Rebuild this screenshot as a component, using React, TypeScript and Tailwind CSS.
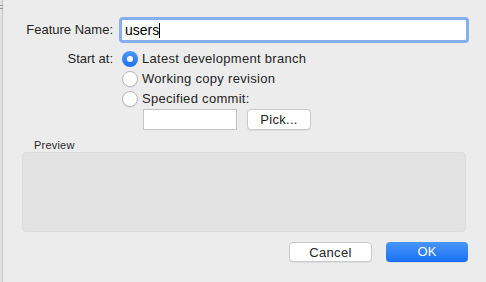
export default function App() {
  return (
    <div
      className="flex h-[282px] w-[486px] overflow-hidden bg-[#ececec] text-[13px] text-[#242424]"
      style={{ fontFamily: "'Liberation Sans', Arial, sans-serif" }}
    >
      {/* window edge */}
      <div className="flex w-[3px] flex-col border-r border-[#c8c8c8] bg-[#e2e2e2]">
        <div className="mt-[5px] h-px w-[3px] bg-[#9a9a9a]" />
        <div className="mt-[2px] h-px w-[3px] bg-[#9a9a9a]" />
      </div>

      <div className="flex flex-1 flex-col pt-[17px]">
        {/* feature name */}
        <div className="flex h-[26px] items-center">
          <div className="w-[110px] text-right">Feature Name:</div>
          <div className="ml-[6px] flex h-[26px] w-[350px] items-center rounded-[4px] border-[3px] border-[#85aff0] bg-white pl-[3px] text-[14px] text-black">
            <span>users</span>
            <span className="h-[15px] w-px bg-black" />
          </div>
        </div>

        {/* start at */}
        <div className="mt-[6px] flex">
          <div className="h-5 w-[110px] text-right leading-5">Start at:</div>
          <div className="ml-[9px] flex flex-col">
            <Radio label="Latest development branch" checked />
            <Radio label="Working copy revision" />
            <Radio label="Specified commit:" />
            <div className="ml-[21px] flex items-center gap-[10px]">
              <div className="h-[21px] w-[94px] border border-[#c4c4c4] bg-white" />
              <button className="h-[21px] w-[64px] rounded-[4px] border border-[#cbcbcb] bg-white text-[13px] tracking-[0.3px] text-[#242424] shadow-[0_1px_0_rgba(0,0,0,0.06)]">
                Pick...
              </button>
            </div>
          </div>
        </div>

        {/* preview */}
        <div className="ml-[31px] mt-[9px] h-[13px] text-[11px] leading-[13px] tracking-[0.2px] text-[#2a2a2a]">
          Preview
        </div>
        <div className="ml-[19px] h-[80px] w-[444px] rounded-[4px] border border-[#dcdcdc] bg-[#e3e3e3]" />

        {/* actions */}
        <div className="mt-[10px] flex justify-end gap-[14px] pr-[18px]">
          <button className="h-5 w-[83px] rounded-[4px] border border-[#cbcbcb] bg-white text-[13px] tracking-[0.3px] text-[#242424] shadow-[0_1px_0_rgba(0,0,0,0.06)]">
            Cancel
          </button>
          <button className="h-5 w-[82px] rounded-[4px] bg-gradient-to-b from-[#4896f9] to-[#1a6ff4] text-[13px] text-white shadow-[0_1px_0_rgba(0,0,0,0.08)]">
            OK
          </button>
        </div>
      </div>
    </div>
  );
}

function Radio({ label, checked }: { label: string; checked?: boolean }) {
  return (
    <div className="flex h-5 items-center gap-[4px]">
      {checked ? (
        <span className="flex h-4 w-4 items-center justify-center rounded-full bg-gradient-to-b from-[#4a97f9] to-[#1d70f2]">
          <span className="h-[6px] w-[6px] rounded-full bg-white" />
        </span>
      ) : (
        <span className="h-4 w-4 rounded-full border border-[#b8b8b8] bg-white shadow-[0_1px_0_rgba(0,0,0,0.05)]" />
      )}
      <span className="tracking-[0.3px]">{label}</span>
    </div>
  );
}
